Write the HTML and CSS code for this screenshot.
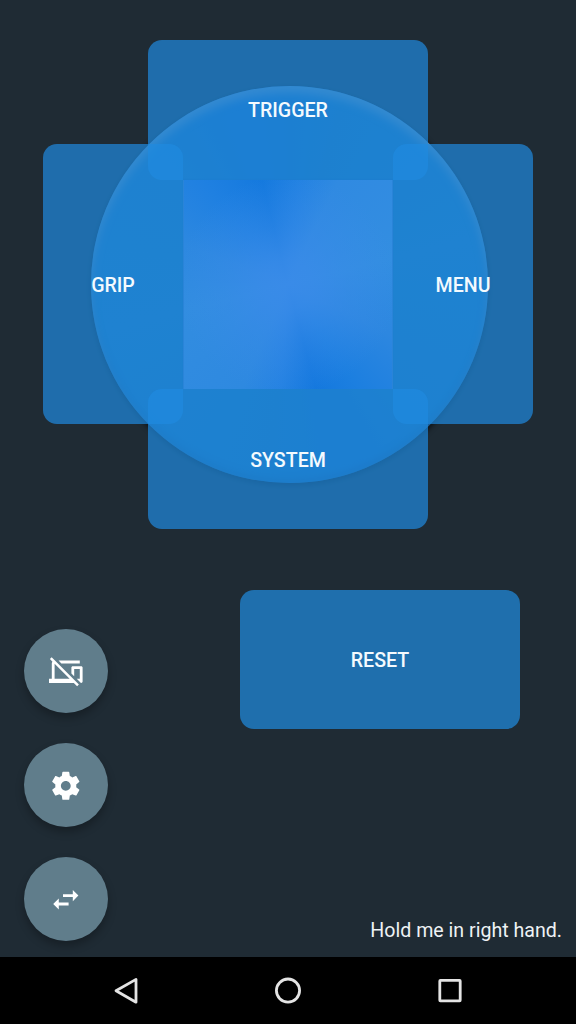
FILE: index.html
```html
<!DOCTYPE html>
<html lang="en">
<head>
<meta charset="utf-8">
<title>Controller</title>
<link rel="stylesheet" href="styles.css">
</head>
<body>
<main class="screen">
  <section class="pad">
    <div class="disc"></div>
    <div class="touch"></div>
    <button class="key trigger">TRIGGER</button>
    <button class="key grip">GRIP</button>
    <button class="key menu">MENU</button>
    <button class="key system">SYSTEM</button>
  </section>
  <section class="lower">
    <div class="fabs">
      <button class="fab" aria-label="Disconnect"><svg viewBox="0 0 24 24"><path d="M22 6V4H6.82l2 2H22zM1.92 1.65L.65 2.92l1.82 1.82C2.18 5.08 2 5.52 2 6v11H0v3h17.73l2.35 2.35 1.27-1.27L3.89 3.62 1.92 1.65zM4 6.27L14.73 17H4V6.27zM23 8h-6c-.55 0-1 .45-1 1v4.18l2 2V10h4v7h-2.18l3 3H23c.55 0 1-.45 1-1V9c0-.55-.45-1-1-1z"/></svg></button>
      <button class="fab" aria-label="Settings"><svg viewBox="0 0 24 24"><path d="M19.43 12.98c.04-.32.07-.64.07-.98s-.03-.66-.07-.98l2.11-1.65c.19-.15.24-.42.12-.64l-2-3.46c-.12-.22-.39-.3-.61-.22l-2.49 1c-.52-.4-1.08-.73-1.69-.98l-.38-2.65C14.46 2.18 14.25 2 14 2h-4c-.25 0-.46.18-.49.42l-.38 2.65c-.61.25-1.17.59-1.69.98l-2.49-1c-.23-.09-.49 0-.61.22l-2 3.46c-.13.22-.07.49.12.64l2.11 1.65c-.04.32-.07.65-.07.98s.03.66.07.98l-2.11 1.65c-.19.15-.24.42-.12.64l2 3.46c.12.22.39.3.61.22l2.49-1c.52.4 1.08.73 1.69.98l.38 2.65c.03.24.24.42.49.42h4c.25 0 .46-.18.49-.42l.38-2.65c.61-.25 1.17-.59 1.69-.98l2.49 1c.23.09.49 0 .61-.22l2-3.46c.12-.22.07-.49-.12-.64l-2.11-1.65zM12 15.5c-1.93 0-3.5-1.57-3.5-3.5s1.57-3.5 3.5-3.5 3.5 1.57 3.5 3.5-1.57 3.5-3.5 3.5z"/></svg></button>
      <button class="fab" aria-label="Switch hand"><svg viewBox="0 0 24 24"><path d="M6.99 11L3 15l3.99 4v-3H14v-2H6.99v-3zM21 9l-3.99-4v3H10v2h7.01v3L21 9z"/></svg></button>
    </div>
    <div class="side">
      <button class="key reset">RESET</button>
      <p class="hint">Hold me in right hand.</p>
    </div>
  </section>
</main>
<nav class="navbar">
  <svg viewBox="0 0 30 30"><path d="M25 3.4v22.8L5 14.8z"/></svg>
  <svg viewBox="0 0 30 30"><circle cx="15" cy="14.6" r="11.6"/></svg>
  <svg viewBox="0 0 30 30"><rect x="4.8" y="4.4" width="20.4" height="20.4" rx=".6"/></svg>
</nav>
</body>
</html>
```
FILE: styles.css
```css
* { box-sizing: border-box; }
body {
  margin: 0;
  width: 576px;
  height: 1024px;
  display: flex;
  flex-direction: column;
  overflow: hidden;
  background: #1f2b34;
  font-family: Roboto, "Liberation Sans", sans-serif;
}
.screen {
  height: 957px;
  padding-top: 39.5px;
}
.pad {
  display: grid;
  width: 490px;
  margin-left: 43px;
  grid-template-columns: 105px 35px 210px 35px 105px;
  grid-template-rows: 104.5px 36px 209px 35px 105px;
}
.disc {
  grid-area: 1 / 1 / 6 / 6;
  place-self: center;
  width: 397px;
  height: 397px;
  margin-left: 3px;
  border-radius: 50%;
  background: conic-gradient(from -14deg, #1464b6, #186aa9 30deg, #1e6fad 90deg, #1a6cab 150deg, #1665b0 172deg, #186aa9 200deg, #1e6fad 270deg, #1c6dab 325deg, #1464b6);
  box-shadow:
    inset 0 7px 8px rgba(150, 160, 175, .6),
    inset 0 -4px 7px rgba(20, 60, 110, .35),
    0 2px 5px 1px rgba(0, 0, 0, .55);
}
.touch {
  grid-area: 3 / 3 / 4 / 4;
  border: solid #2a84d8;
  border-width: 0 1px;
  background:
    radial-gradient(circle, #398be8 0, rgba(57, 139, 232, .85) 25px, rgba(57, 139, 232, .45) 60px, rgba(57, 139, 232, 0) 110px),
    conic-gradient(from -14deg, #1479de, #2382e2 20deg, #308ae1 40deg, #338ee1 90deg, #2d87e0 130deg, #1c7fe0 160deg, #1478de 179deg, #2582e2 198deg, #2e89e0 218deg, #328de0 270deg, #2d88e0 305deg, #1f80e1 335deg, #1479de);
  box-shadow: 0 -1px 1px rgba(20, 90, 165, .5);
}
.key {
  border: 0;
  padding: 3px 0 0;
  border-radius: 14px;
  background: rgba(31, 138, 224, .7);
  color: #f4fafe;
  font: 500 19.6px/24px Roboto, "Liberation Sans", sans-serif;
}
.trigger { grid-area: 1 / 2 / 3 / 5; }
.grip { grid-area: 2 / 1 / 5 / 3; }
.menu { grid-area: 2 / 4 / 5 / 6; }
.system { grid-area: 4 / 2 / 6 / 5; }
.lower {
  display: flex;
  justify-content: space-between;
  height: 428px;
  padding: 61px 14px 0 24px;
}
.fabs {
  display: flex;
  flex-direction: column;
  gap: 30px;
  padding-top: 39.4px;
}
.fab {
  display: flex;
  align-items: center;
  justify-content: center;
  width: 84px;
  height: 84px;
  padding: 0;
  border: 0;
  border-radius: 50%;
  background: #607d8b;
  box-shadow: 0 5px 9px rgba(0, 0, 0, .27);
}
.fab svg { width: 33.6px; height: 33.6px; fill: #fff; }
.side {
  display: flex;
  flex-direction: column;
  justify-content: space-between;
  width: 322px;
  padding-bottom: 14px;
}
.reset { width: 280px; height: 139px; background: #1f6fad; }
.hint {
  margin: 0;
  text-align: right;
  color: #eef2f4;
  font-size: 19.6px;
  line-height: 24px;
}
.navbar {
  display: flex;
  justify-content: center;
  align-items: center;
  gap: 132px;
  height: 67px;
  background: #000;
}
.navbar svg {
  width: 30px;
  height: 30px;
  fill: none;
  stroke: #e4e4e4;
  stroke-width: 2.8;
  stroke-linejoin: round;
}
```
